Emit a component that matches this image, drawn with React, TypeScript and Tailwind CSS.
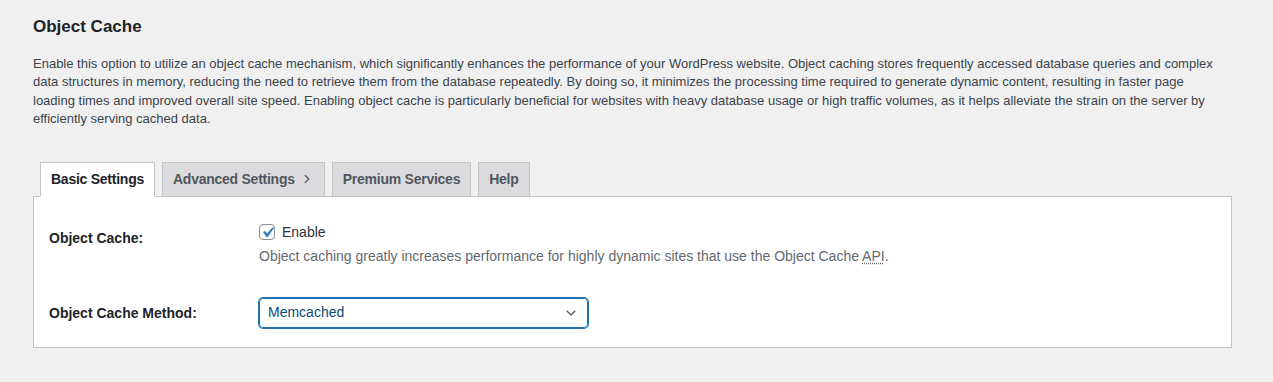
import { ChevronDown, ChevronRight } from "lucide-react";

const font = { fontFamily: '"Liberation Sans", Arial, sans-serif' };

const tabs = [
  { label: "Basic Settings", active: true },
  { label: "Advanced Settings", arrow: true },
  { label: "Premium Services" },
  { label: "Help" },
];

const intro = [
  "Enable this option to utilize an object cache mechanism, which significantly enhances the performance of your WordPress website. Object caching stores frequently accessed database queries and complex",
  "data structures in memory, reducing the need to retrieve them from the database repeatedly. By doing so, it minimizes the processing time required to generate dynamic content, resulting in faster page",
  "loading times and improved overall site speed. Enabling object cache is particularly beneficial for websites with heavy database usage or high traffic volumes, as it helps alleviate the strain on the server by",
  "efficiently serving cached data.",
];

export default function App() {
  return (
    <div className="min-h-[382px] w-full bg-[#f0f0f1] text-[#3c434a]" style={font}>
      <div className="pl-[33px] pr-[41px] pt-[17px]">
        <h2 className="text-[17px] font-bold leading-[20px] text-[#1d2327]">Object Cache</h2>

        <p className="mt-[18px] text-[13px] leading-[18.4px] text-[#3c434a]">
          {intro.map((line, i) => (
            <span key={i} className="block whitespace-nowrap">
              {line}
            </span>
          ))}
        </p>

        {/* tabs */}
        <div className="mt-[33px] flex gap-[7px] pl-[7px]">
          {tabs.map((t) => (
            <div
              key={t.label}
              className={`-mb-px flex h-[35px] items-center gap-[5px] border border-[#c3c4c7] px-[10px] text-[14px] font-bold tracking-[-0.25px] ${
                t.active ? "border-b-white bg-white text-[#1d2327]" : "bg-[#dcdcde] text-[#50575e]"
              }`}
            >
              {t.label}
              {t.arrow && <ChevronRight size={14} strokeWidth={2} />}
            </div>
          ))}
        </div>

        {/* panel */}
        <div className="border border-[#c3c4c7] bg-white pb-[19px] pl-[15px] pt-[12px]">
          <div className="flex">
            <div className="w-[210px] pt-[20px] text-[14px] font-bold leading-[18px] text-[#1d2327]">
              Object Cache:
            </div>
            <div className="pt-[15px]">
              <label className="flex items-center gap-[7px] text-[14px] leading-[16px] text-[#2c3338]">
                <span className="relative flex h-[16px] w-[16px] items-center justify-center rounded-[4px] border border-[#8c8f94] bg-white">
                  <svg viewBox="0 0 20 20" className="absolute left-[-3px] top-[-3px] h-[21px] w-[21px]">
                    <path d="M14.83 4.89l1.34.94-5.81 8.38H9.02L5.78 9.67l1.34-1.25 2.57 2.4z" fill="#3582c4" />
                  </svg>
                </span>
                Enable
              </label>
              <p className="mt-[7px] text-[14px] leading-[18px] text-[#646970]">
                Object caching greatly increases performance for highly dynamic sites that use the Object Cache{" "}
                <abbr className="underline decoration-dotted underline-offset-2" title="Application Programming Interface">
                  API
                </abbr>
                .
              </p>
            </div>
          </div>

          <div className="mt-[33px] flex items-center">
            <div className="w-[210px] text-[14px] font-bold leading-[18px] text-[#1d2327]">Object Cache Method:</div>
            <div className="flex h-[30px] w-[329px] items-center justify-between rounded-[4px] border border-[#2271b1] pl-[8px] pr-[8px] text-[14px] text-[#0a4b78] shadow-[0_0_0_1px_#2271b1]">
              <span>Memcached</span>
              <ChevronDown size={16} strokeWidth={1.75} className="text-[#50575e]" />
            </div>
          </div>
        </div>
      </div>
    </div>
  );
}
